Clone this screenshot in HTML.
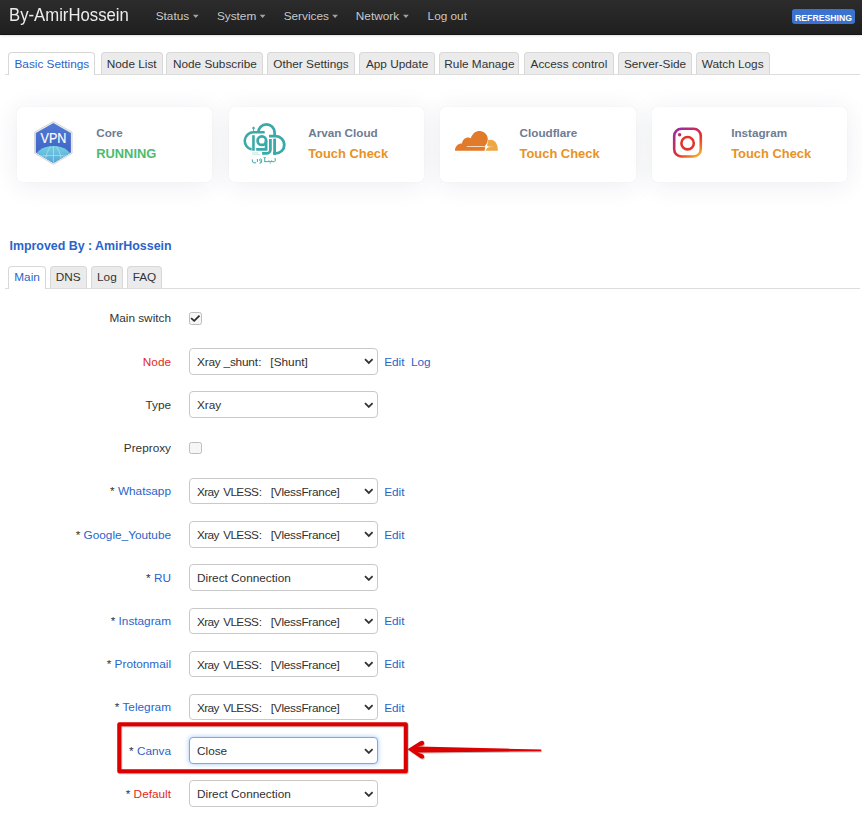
<!DOCTYPE html>
<html><head><meta charset="utf-8">
<style>
*{box-sizing:border-box;margin:0;padding:0}
html,body{width:862px;height:820px;overflow:hidden;background:#fff}
body{font-family:"Liberation Sans",sans-serif;font-size:11.8px;color:#333;position:relative}
.abs{position:absolute;white-space:nowrap}
#nav{position:absolute;left:0;top:0;width:862px;height:34.6px;background:linear-gradient(#2c2c2c,#1f1f1f);border-bottom:1px solid #141414;box-shadow:0 1px 2px rgba(0,0,0,.12)}
.brand{position:absolute;left:9.3px;top:1.2px;font-size:17.6px;line-height:28px;color:#ececec;transform:scaleX(0.95);transform-origin:0 0}
.ni{position:absolute;top:0;line-height:26px;color:#cacaca;text-shadow:0 -1px 0 rgba(0,0,0,.25)}
.caret{position:absolute;top:14.9px;width:0;height:0;border-left:2.9px solid transparent;border-right:2.9px solid transparent;border-top:3px solid #a0a0a0}
.badge{position:absolute;left:792px;top:9px;width:63px;height:14.8px;background:#3a73cf;border-radius:3px;color:#fff;font-weight:bold;font-size:8.7px;line-height:18.4px;text-align:center;overflow:hidden}
.tline{position:absolute;left:5px;width:855px;height:1px;background:#dcdcdc}
.tab{position:absolute;height:22px;border:1px solid #d8d8d8;border-bottom:none;border-radius:4px 4px 0 0;background:#ebebeb;color:#333;text-align:center;line-height:22.8px}
.tab.act{background:#fff;color:#2a64ca;height:23.2px}
.card{position:absolute;top:106.6px;width:195.4px;height:75.2px;background:#fff;border-radius:5px;box-shadow:0 3px 26px rgba(30,50,90,.085),0 0 1px rgba(0,0,0,.10)}
.ct{position:absolute;left:79.4px;top:19.1px;font-weight:bold;font-size:11.7px;color:#6e7c93}
.cs{position:absolute;left:79.4px;top:39.9px;font-weight:bold;font-size:12.9px;color:#e8921f}
.cs.g{color:#4cbb6f}
.lab{position:absolute;right:691px;text-align:right;white-space:nowrap;margin-top:0.6px}
.blue{color:#2a64ca}
.red{color:#df2a1e}
.sel{position:absolute;left:189px;width:189px;height:26.6px;border:1px solid #c9c9c9;border-radius:4px;background:#fff;font-size:11.8px;line-height:26.6px;padding-left:7px;color:#303030;white-space:nowrap}
.chev{position:absolute;right:3.6px;top:9.4px;width:9.6px;height:6.6px}
.edit{position:absolute;left:384.2px;color:#2a64ca;margin-top:0.8px}
.cb{position:absolute;left:189.2px;width:12.7px;height:12.8px;border:1px solid #bdbdbd;border-radius:2.5px;background:#f6f6f6}
.fc{display:inline-block;width:12.6px;padding-left:0.6px}
.v1{letter-spacing:-0.6px;word-spacing:1.6px}.v2{letter-spacing:-0.25px}
.sel.focus{border-color:#76aaea;box-shadow:0 0 5px rgba(82,150,236,.55)}
#ov{position:absolute;left:0;top:0;width:862px;height:820px;pointer-events:none}
</style></head><body>
<div id="nav">
  <div class="brand">By-AmirHossein</div>
  <div class="ni" style="left:155.7px;top:3.4px">Status</div>
  <div class="ni" style="left:216.9px;top:3.4px">System</div>
  <div class="ni" style="left:283.7px;top:3.4px">Services</div>
  <div class="ni" style="left:355.8px;top:3.4px">Network</div>
  <div class="ni" style="left:427.6px;top:3.4px">Log out</div>
  <div class="badge">REFRESHING</div>
</div>

<div class="tline" style="top:73.9px"></div>
<div class="tab act" style="left:8.3px;top:52.3px;width:87.2px">Basic Settings</div>
<div class="tab" style="left:100.5px;top:52.3px;width:62.4px">Node List</div>
<div class="tab" style="left:166.3px;top:52.3px;width:97.2px">Node Subscribe</div>
<div class="tab" style="left:267.3px;top:52.3px;width:87.4px">Other Settings</div>
<div class="tab" style="left:359.4px;top:52.3px;width:75.4px">App Update</div>
<div class="tab" style="left:439.3px;top:52.3px;width:80.2px">Rule Manage</div>
<div class="tab" style="left:524.2px;top:52.3px;width:89.5px">Access control</div>
<div class="tab" style="left:618.4px;top:52.3px;width:73.3px">Server-Side</div>
<div class="tab" style="left:695.5px;top:52.3px;width:74.3px">Watch Logs</div>

<div class="card" style="left:16.8px">
  <div class="ct">Core</div><div class="cs g">RUNNING</div>
</div>
<div class="card" style="left:228.8px">
  <div class="ct">Arvan Cloud</div><div class="cs">Touch Check</div>
</div>
<div class="card" style="left:440.2px">
  <div class="ct">Cloudflare</div><div class="cs">Touch Check</div>
</div>
<div class="card" style="left:651.8px">
  <div class="ct">Instagram</div><div class="cs">Touch Check</div>
</div>

<div class="abs blue" style="left:9.5px;top:239.2px;font-weight:bold;font-size:12.4px">Improved By : AmirHossein</div>
<div class="tline" style="top:287.8px"></div>
<div class="tab act" style="left:8.3px;top:266.3px;line-height:21.6px;width:37.6px">Main</div>
<div class="tab" style="left:50px;top:266.3px;line-height:21.6px;width:36.5px">DNS</div>
<div class="tab" style="left:91px;top:266.3px;line-height:21.6px;width:31.8px">Log</div>
<div class="tab" style="left:127.3px;top:266.3px;line-height:21.6px;width:34.4px">FAQ</div>

<!--FORM-->
<div class="lab " style="top:304.9px;line-height:26.6px">Main switch</div>
<div class="cb" style="top:311.8px"><svg viewBox="0 0 13 13" style="position:absolute;left:-1px;top:-1px;width:13px;height:13px"><path d="M2.1 6.2 L5.2 8.8 L10.5 3.6" fill="none" stroke="#2a2a2a" stroke-width="1.75"/></svg></div>
<div class="lab red" style="top:348.1px;line-height:26.6px">Node</div>
<div class="sel" style="top:348.1px"><span style="letter-spacing:-0.2px">Xray _shunt</span><span class="fc">:</span>[Shunt]<svg class="chev" viewBox="0 0 9.6 6.6"><path d="M1 1.1 L4.8 4.9 L8.6 1.1" fill="none" stroke="#333" stroke-width="1.8"/></svg></div>
<div class="edit" style="top:348.1px;line-height:26.6px">Edit</div>
<div class="edit" style="left:411px;top:348.1px;line-height:26.6px">Log</div>
<div class="lab " style="top:391.3px;line-height:26.6px">Type</div>
<div class="sel" style="top:391.3px">Xray<svg class="chev" viewBox="0 0 9.6 6.6"><path d="M1 1.1 L4.8 4.9 L8.6 1.1" fill="none" stroke="#333" stroke-width="1.8"/></svg></div>
<div class="lab " style="top:434.6px;line-height:26.6px">Preproxy</div>
<div class="cb" style="top:441.5px"></div>
<div class="lab " style="top:477.8px;line-height:26.6px">* <span class="blue">Whatsapp</span></div>
<div class="sel" style="top:477.8px"><span class="v1">Xray VLESS</span><span class="fc">:</span><span class="v2">[VlessFrance]</span><svg class="chev" viewBox="0 0 9.6 6.6"><path d="M1 1.1 L4.8 4.9 L8.6 1.1" fill="none" stroke="#333" stroke-width="1.8"/></svg></div>
<div class="edit" style="top:477.8px;line-height:26.6px">Edit</div>
<div class="lab " style="top:521.0px;line-height:26.6px">* <span class="blue">Google_Youtube</span></div>
<div class="sel" style="top:521.0px"><span class="v1">Xray VLESS</span><span class="fc">:</span><span class="v2">[VlessFrance]</span><svg class="chev" viewBox="0 0 9.6 6.6"><path d="M1 1.1 L4.8 4.9 L8.6 1.1" fill="none" stroke="#333" stroke-width="1.8"/></svg></div>
<div class="edit" style="top:521.0px;line-height:26.6px">Edit</div>
<div class="lab " style="top:564.2px;line-height:26.6px">* <span class="blue">RU</span></div>
<div class="sel" style="top:564.2px">Direct Connection<svg class="chev" viewBox="0 0 9.6 6.6"><path d="M1 1.1 L4.8 4.9 L8.6 1.1" fill="none" stroke="#333" stroke-width="1.8"/></svg></div>
<div class="lab " style="top:607.5px;line-height:26.6px">* <span class="blue">Instagram</span></div>
<div class="sel" style="top:607.5px"><span class="v1">Xray VLESS</span><span class="fc">:</span><span class="v2">[VlessFrance]</span><svg class="chev" viewBox="0 0 9.6 6.6"><path d="M1 1.1 L4.8 4.9 L8.6 1.1" fill="none" stroke="#333" stroke-width="1.8"/></svg></div>
<div class="edit" style="top:607.5px;line-height:26.6px">Edit</div>
<div class="lab " style="top:650.7px;line-height:26.6px">* <span class="blue">Protonmail</span></div>
<div class="sel" style="top:650.7px"><span class="v1">Xray VLESS</span><span class="fc">:</span><span class="v2">[VlessFrance]</span><svg class="chev" viewBox="0 0 9.6 6.6"><path d="M1 1.1 L4.8 4.9 L8.6 1.1" fill="none" stroke="#333" stroke-width="1.8"/></svg></div>
<div class="edit" style="top:650.7px;line-height:26.6px">Edit</div>
<div class="lab " style="top:693.9px;line-height:26.6px">* <span class="blue">Telegram</span></div>
<div class="sel" style="top:693.9px"><span class="v1">Xray VLESS</span><span class="fc">:</span><span class="v2">[VlessFrance]</span><svg class="chev" viewBox="0 0 9.6 6.6"><path d="M1 1.1 L4.8 4.9 L8.6 1.1" fill="none" stroke="#333" stroke-width="1.8"/></svg></div>
<div class="edit" style="top:693.9px;line-height:26.6px">Edit</div>
<div class="lab " style="top:737.2px;line-height:26.6px">* <span class="blue">Canva</span></div>
<div class="sel focus" style="top:737.2px">Close<svg class="chev" viewBox="0 0 9.6 6.6"><path d="M1 1.1 L4.8 4.9 L8.6 1.1" fill="none" stroke="#333" stroke-width="1.8"/></svg></div>
<div class="lab " style="top:780.4px;line-height:26.6px">* <span class="red">Default</span></div>
<div class="sel" style="top:780.4px">Direct Connection<svg class="chev" viewBox="0 0 9.6 6.6"><path d="M1 1.1 L4.8 4.9 L8.6 1.1" fill="none" stroke="#333" stroke-width="1.8"/></svg></div>
<!--/FORM-->
<svg id="ov" viewBox="0 0 862 820">
<defs>
<linearGradient id="vb" x1="0" y1="0" x2="0" y2="1"><stop offset="0" stop-color="#5079d4"/><stop offset="1" stop-color="#3a5ec2"/></linearGradient>
<linearGradient id="vg" x1="0" y1="0" x2="0" y2="1"><stop offset="0" stop-color="#74cfe0"/><stop offset="1" stop-color="#3f8bd2"/></linearGradient>
<clipPath id="hexclip"><polygon points="53.4,123.1 70.9,132.9 70.9,152.5 53.4,162.9 35.8,152.5 35.8,132.9"/></clipPath>
<linearGradient id="ig" x1="0.1" y1="0" x2="0.9" y2="1"><stop offset="0" stop-color="#9b2aa0"/><stop offset="0.4" stop-color="#cf2a5a"/><stop offset="0.6" stop-color="#e0302a"/><stop offset="0.85" stop-color="#ee7a2a"/><stop offset="1" stop-color="#f4b830"/></linearGradient>
<filter id="sh" x="-5%" y="-20%" width="110%" height="140%"><feDropShadow dx="0.6" dy="0.8" stdDeviation="0.6" flood-color="#000" flood-opacity="0.35"/></filter>
</defs>
<!-- carets -->
<polygon points="192.9,14.8 198.7,14.8 195.8,17.9" fill="#a3a3a3"/>
<polygon points="259.7,14.8 265.5,14.8 262.6,17.9" fill="#a3a3a3"/>
<polygon points="332.2,14.8 338.0,14.8 335.1,17.9" fill="#a3a3a3"/>
<polygon points="403.0,14.8 408.8,14.8 405.9,17.9" fill="#a3a3a3"/>
<!-- VPN -->
<polygon points="53.4,121.6 72.1,132.1 72.1,153.2 53.4,164.4 34.6,153.2 34.6,132.1" fill="#f0f0f0" stroke="#cdcdcd" stroke-width="0.8" stroke-linejoin="round"/>
<polygon points="53.4,123.1 70.9,132.9 70.9,152.5 53.4,162.9 35.8,152.5 35.8,132.9" fill="url(#vb)" stroke-linejoin="round"/>
<g clip-path="url(#hexclip)">
<ellipse cx="53.4" cy="160.5" rx="19.5" ry="14.5" fill="url(#vg)"/>
<g fill="none" stroke="#cdeef6" stroke-width="0.6" opacity="0.9">
<line x1="53.4" y1="146" x2="53.4" y2="164"/>
<path d="M51,146.2 Q46,151 45,164"/>
<path d="M55.8,146.2 Q60.8,151 61.8,164"/>
<path d="M36,156.2 Q53.4,154.6 71,156.2"/>
</g>
</g>
<text x="53.5" y="143.4" font-size="13.4" fill="#fff" stroke="#fff" stroke-width="0.15" text-anchor="middle" font-family="Liberation Sans" transform="translate(53.5 143.4) scale(0.94 1.03) translate(-53.5 -143.4)">VPN</text>
<!-- Arvan -->
<g fill="none" stroke="#3aa9aa" stroke-width="2.6">
<path d="M264.7,132.3 L253.6,132.3 A8.65,8.65 0 0 0 251.6,149.4"/>
<line x1="253.45" y1="135.2" x2="253.45" y2="150.7"/>
<circle cx="261.85" cy="140.7" r="4.25" stroke-width="2.75"/>
<path d="M266.1,140.7 L266.1,149.3 L256.2,149.3" stroke-width="2.7"/>
<path d="M270.4,139 L270.4,149.4 A4,4 0 0 1 266.4,153.4 L262.1,153.4" stroke-width="2.8"/>
<path d="M258.3,132.5 A8.15,8.15 0 0 1 274.6,132.5 L274.6,136.5" stroke-width="2.7"/>
<path d="M269,136.2 L275.7,136.2 A8.6,8.6 0 0 1 275.7,153.4 L273.2,153.4" stroke-width="2.8"/>
<line x1="274.6" y1="138.6" x2="274.6" y2="154.8" stroke-width="2.8"/>
</g>
<g fill="#3aa9aa">
<rect x="252.4" y="127" width="2.2" height="2.2" transform="rotate(45 253.5 128.1)"/>
<rect x="253.1" y="128.5" width="0.8" height="2.5"/>
<rect x="252.2" y="152.4" width="6" height="0.9" opacity="0.3"/>
<rect x="252.2" y="153.8" width="8" height="0.9" opacity="0.3"/>
</g>
<g fill="none" stroke="#3aa9aa" stroke-width="1.1" opacity="0.9">
<path d="M252.4,159.3 Q251.9,162.9 254.7,162.9 L256.1,162.7"/>
<line x1="257.4" y1="159" x2="257.4" y2="161.9"/>
<circle cx="260.6" cy="160" r="1.05" stroke-width="1"/>
<path d="M261.6,160.2 Q261.9,162.8 259.5,163.2"/>
<line x1="264.7" y1="157.7" x2="264.7" y2="161.9"/>
<line x1="263.5" y1="157.6" x2="266" y2="157.6" stroke-width="0.8"/>
<path d="M264.7,161.6 L274.6,161.6"/>
<line x1="268.9" y1="160.3" x2="268.9" y2="161.9" stroke-width="0.9"/>
<line x1="271.6" y1="160.3" x2="271.6" y2="161.9" stroke-width="0.9"/>
<line x1="275.2" y1="158" x2="275.2" y2="161.3"/>
</g>
<g fill="#3aa9aa"><circle cx="270.3" cy="163.1" r="0.55"/></g>
<!-- Cloudflare -->
<path d="M455,150.8 C455,146.2 458,143.6 462,143.6 C462.3,139.8 465,137.4 468.2,137.4 C469.2,137.4 470,137.7 470.8,138.2 C472.3,133.6 475.6,131 479.6,131 C484.2,131 487.8,134.8 487.8,139.3 C487.8,141.8 486.8,144 485.2,145.6 L485.6,147 L484.4,150.8 Z" fill="#e27a2b"/>
<path d="M485.6,150.8 C486.2,148.6 487.4,147.2 489,146.9 C488.2,146.4 487.2,145.8 487,145.2 C487.8,143.6 488.2,141.8 488.1,140.1 C488.9,139.8 489.8,139.7 490.7,139.7 C494.7,139.7 497.9,143.6 497.9,150.8 Z" fill="#eea843"/>
<path d="M466.8,146.5 L484.5,146.5" stroke="#fbe3cc" stroke-width="0.9"/>
<path d="M486.2,144.5 L486.9,146.7 L494,146.5 L486.9,147.6 L485.8,150.6 L485,147.6 L484,147 L485,146.6 Z" fill="#fdf3ea"/>
<!-- Instagram -->
<rect x="674.2" y="128.8" width="26.6" height="27.7" rx="7.2" fill="none" stroke="url(#ig)" stroke-width="2.6"/>
<circle cx="687.6" cy="143.2" r="6.2" fill="none" stroke="#e0352a" stroke-width="2.6"/>
<circle cx="679.6" cy="134.8" r="1.75" fill="#c42c6c"/>
<!-- red box -->
<g filter="url(#sh)">
<rect x="119.3" y="724.3" width="286.5" height="46.9" fill="none" stroke="#dd0000" stroke-width="4.1" stroke-linejoin="round"/>
<path d="M407.6,749.2 L420.3,741.2 Q422.9,739.9 424,742.2 Q424.7,744.3 422.4,745.6 L417.5,746.6 L541.2,749.5 L541.2,751.2 L417.5,752.5 L422.4,753.9 Q424.7,755.2 424,757.4 Q422.8,759.4 420.2,758 Z" fill="#dd0000"/>
</g>
</svg>
</body></html>
